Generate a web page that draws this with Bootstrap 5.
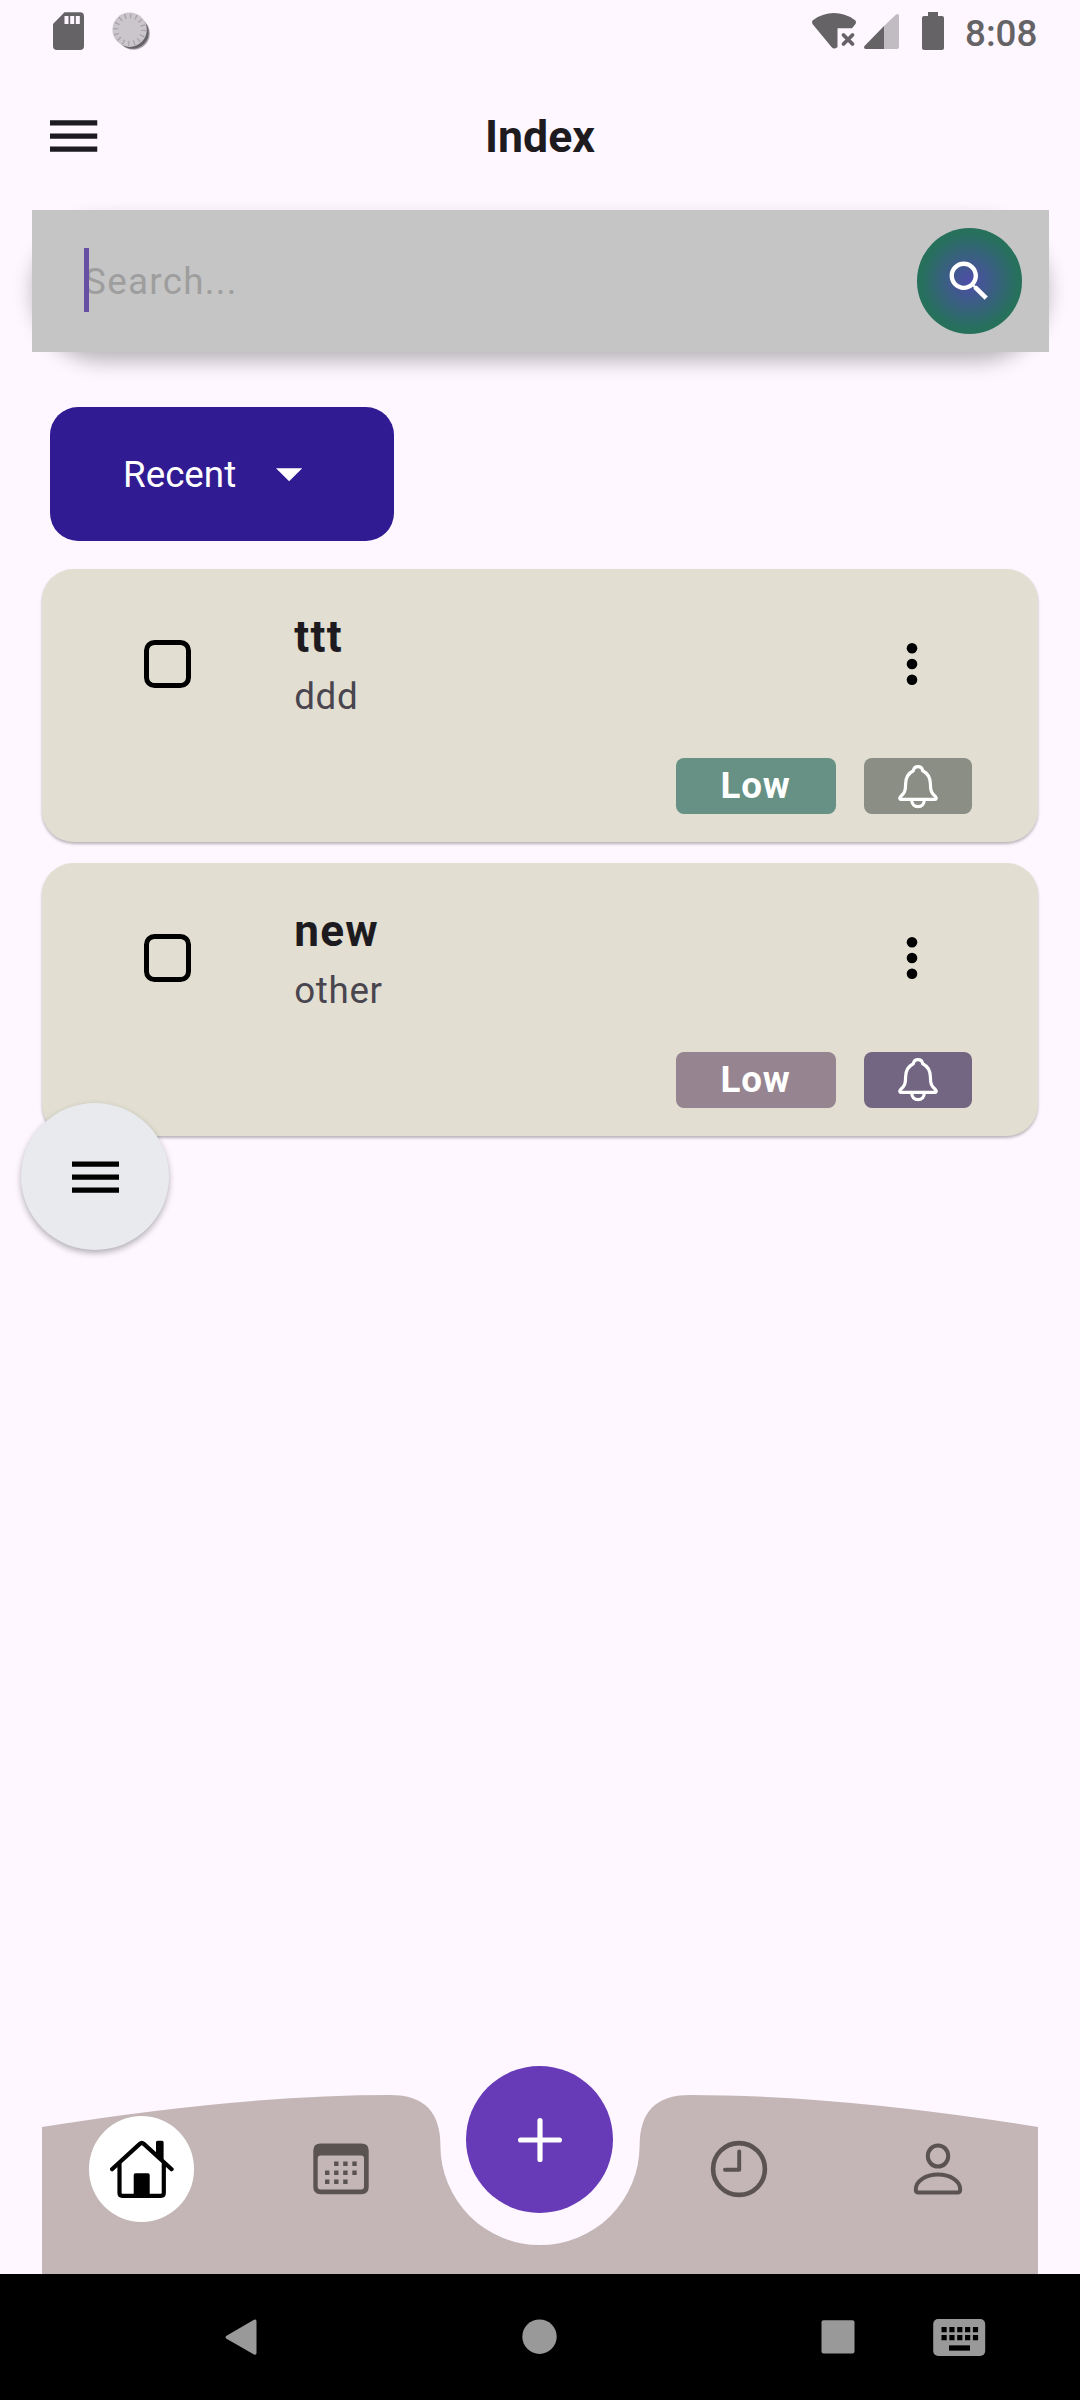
<!DOCTYPE html>
<html lang="en">
<head>
<meta charset="utf-8">
<meta name="viewport" content="width=device-width, initial-scale=1">
<title>Index</title>
<link href="https://cdn.jsdelivr.net/npm/bootstrap@5.3.0/dist/css/bootstrap.min.css" rel="stylesheet">
<style>
body{margin:0;background:#fef7ff;font-family:Roboto,"Liberation Sans",sans-serif;color:#1d1b20}
.screen{width:1080px;height:2400px;overflow:hidden}
svg{display:block;flex:none}
.status{height:63px}
.clock-text{font-size:36.75px;font-weight:500;line-height:67px;color:#656366;width:115px}
.appbar{height:147px;padding:0 50px}
.appbar h1{font-size:44.6px;font-weight:700;line-height:60px}
.appbar svg{margin-bottom:1px}
.side{width:48px}
.search-pill{margin:0 31.5px;height:142px;border-radius:71px;background:#999;box-shadow:0 10px 20px -1px rgba(0,0,0,.28)}
.search-box{height:141.5px;background:#c5c5c5;padding-left:52.5px;padding-right:26.5px}
.caret{width:5.25px;height:64px;background:#6750a4;top:38px;left:52.5px}
.search-hint{font-size:36.75px;letter-spacing:1.31px;color:#9e9e9e;padding-top:2px}
.search-btn{width:105.5px;height:105.5px;background:radial-gradient(circle closest-side at 50% 50%,#4f4da9 0%,#26705c 92%)}
.sort-btn,.sort-btn:hover{width:343.5px;height:133.7px;margin:55px 0 0 50px;border-radius:28px;background:#311b92;color:#fff;font-size:36.75px;padding:2px 0 0 73px;border:0}
.sort-btn svg{margin-right:91.5px}
.tasks{margin:28.3px 42px 0;gap:20.5px}
.task{height:273.4px;border:0;border-radius:31.5px;background:#e2dfd2;box-shadow:0 2px 3px rgba(0,0,0,.28);padding:37px 66px 0 101.5px}
.task-top{height:120px}
.tick{width:47.6px;height:47.6px;border:5.25px solid #000;border-radius:10.5px;margin-bottom:4px}
.task-text{margin-left:103.1px;padding-top:2px}
.task-title{font-size:44.1px;font-weight:700;line-height:60px;letter-spacing:1.31px}
.task-sub{font-size:36.75px;line-height:60px;color:#49454f;letter-spacing:.66px}
.dots{margin-right:54px;margin-bottom:4px}
.chips{margin-top:32.4px;gap:28.5px}
.chip{height:55.3px;border-radius:8px;color:#fff;font-weight:700;font-size:36.75px;letter-spacing:.8px}
.chip-level{width:160.2px}
.chip-bell{width:107.8px}
.chip-bell svg{margin-top:1px}
.c-teal{background:#679184}.c-olive{background:#8b8e84}.c-mauve{background:#968490}.c-violet{background:#736682}
.fab{left:21px;top:1103px;width:148px;height:147px;background:#e8eaed;box-shadow:0 3px 6px rgba(0,0,0,.3)}
.fab svg{margin:1px 0 0 1px}
.tabs{margin:auto 42px 0;height:180px}
.tabs-bg{left:0;top:0}
.tab-cell{width:20%;height:150px}
.home-disc{width:105.5px;height:105.5px;background:#fff}
.add-disc{width:147px;height:147px;background:#673ab7;margin-top:-59px}
.sysnav{height:126px;background:#000}
</style>
</head>
<body>
<div class="screen position-relative d-flex flex-column">
  <div class="status d-flex justify-content-between">
    <svg width="200" height="63" viewBox="0 0 200 63">
      <path fill="#656366" d="M64.500 12.300H80Q84 12.300 84 16.300V46Q84 50 80 50H57Q53 50 53 46V24Z"/>
      <path fill="#fef7ff" d="M64.500 16h4v8h-4zM70.200 16h4v8h-4zM75.800 16h4v8h-4z"/>
      <circle cx="133.500" cy="33.500" r="16.300" fill="#aaa6ab"/><circle cx="132.500" cy="32.500" r="16.200" fill="#656366"/>
      <circle cx="129.600" cy="29.700" r="17.200" fill="#cbc5cc"/>
      <circle cx="129.600" cy="29.700" r="13.700" fill="none" stroke="#aaa5ab" stroke-width="5" stroke-dasharray="1.400 3.980"/>
    </svg>
    <div class="d-flex">
      <svg width="154" height="63" viewBox="812 0 154 63" fill="#656366">
        <path d="M813.500 24Q812 21 815 19.500Q824 13 835 13Q846 13 855 19.500Q858 21 856.500 24L853 28.300H838.500V47Q835 50 832.500 47Z"/>
        <path d="M844.500 35l9 9m0-9l-9 9" stroke="#656366" stroke-width="3.800" stroke-linecap="round"/>
        <path fill="#c1bcc2" d="M885 26L897 14.500Q900 13 900 16V47Q900 49 898 49H885Z"/>
        <path d="M885 26V49H867Q864 48.500 865.500 46Z"/>
        <path d="M929 12h10v4h4q2 0 2 2v30q0 2-2 2h-18q-2 0-2-2v-30q0-2 2-2h4z"/>
      </svg>
      <span class="clock-text">8:08</span>
    </div>
  </div>

  <header class="appbar d-flex align-items-center justify-content-between">
    <svg width="48" height="34" viewBox="0 0 48 34"><path d="M0 3.900h47.250M0 17h47.250M0 30.100h47.250" stroke="#1d1b20" stroke-width="5.250"/></svg>
    <h1 class="m-0">Index</h1>
    <div class="side"></div>
  </header>

  <div class="search-pill">
    <div class="search-box position-relative d-flex align-items-center justify-content-between">
      <span class="caret position-absolute"></span>
      <span class="search-hint">Search...</span>
      <div class="search-btn rounded-circle d-flex align-items-center justify-content-center">
        <svg width="52.500" height="52.500" viewBox="0 0 24 24" fill="#fff"><path d="M15.500 14h-.79l-.28-.27C15.410 12.590 16 11.110 16 9.500 16 5.910 13.090 3 9.500 3S3 5.910 3 9.500 5.910 16 9.500 16c1.610 0 3.090-.59 4.230-1.570l.27.28v.79l5 4.990L20.490 19l-4.990-5zm-6 0C7.010 14 5 11.990 5 9.500S7.010 5 9.500 5 14 7.010 14 9.500 11.990 14 9.500 14z"/></svg>
      </div>
    </div>
  </div>

  <button class="btn sort-btn d-flex align-items-center flex-shrink-0" type="button">Recent
    <svg class="ms-auto" width="26.300" height="13.500" viewBox="0 0 10 5"><path d="M0 0h10L5 5z" fill="#fff"/></svg>
  </button>

  <div class="tasks d-flex flex-column">
    <div class="card task">
      <div class="task-top d-flex align-items-center">
        <span class="tick"></span>
        <div class="task-text flex-grow-1"><div class="task-title">ttt</div><div class="task-sub">ddd</div></div>
        <svg class="dots" width="12" height="44" viewBox="-6 -22 12 44"><circle r="5.300" cy="-15.800"/><circle r="5.300"/><circle r="5.300" cy="15.800"/></svg>
      </div>
      <div class="chips d-flex justify-content-end">
        <span class="chip chip-level c-teal d-flex align-items-center justify-content-center">Low</span>
        <span class="chip chip-bell c-olive d-flex align-items-center justify-content-center">
          <svg width="40" height="44" viewBox="0 0 40 44" fill="none" stroke="#fff" stroke-width="3.200" stroke-linejoin="round"><path id="bell" d="M20 1.700C17.500 1.700 15.800 3.200 15.300 5.800C10 8.500 7.600 13 7.600 19C7.600 26 6.500 28 2.600 31.500C1.200 33 1.600 34.400 3 34.400H37C38.400 34.400 38.800 33 37.400 31.500C33.500 28 32.400 26 32.400 19C32.400 13 30 8.500 24.700 5.800C24.200 3.200 22.500 1.700 20 1.700ZM13.700 34.800C13.700 39 16.300 41.700 20 41.700S26.300 39 26.300 34.800"/></svg>
        </span>
      </div>
    </div>
    <div class="card task">
      <div class="task-top d-flex align-items-center">
        <span class="tick"></span>
        <div class="task-text flex-grow-1"><div class="task-title">new</div><div class="task-sub">other</div></div>
        <svg class="dots" width="12" height="44" viewBox="-6 -22 12 44"><circle r="5.300" cy="-15.800"/><circle r="5.300"/><circle r="5.300" cy="15.800"/></svg>
      </div>
      <div class="chips d-flex justify-content-end">
        <span class="chip chip-level c-mauve d-flex align-items-center justify-content-center">Low</span>
        <span class="chip chip-bell c-violet d-flex align-items-center justify-content-center">
          <svg width="40" height="44" viewBox="0 0 40 44" fill="none" stroke="#fff" stroke-width="3.200" stroke-linejoin="round"><use href="#bell"/></svg>
        </span>
      </div>
    </div>
  </div>

  <div class="fab position-absolute rounded-circle d-flex align-items-center justify-content-center">
    <svg width="47.250" height="32" viewBox="0 0 47.250 32"><path d="M0 3h47.250M0 16.100h47.250M0 29.200h47.250" stroke="#000" stroke-width="5.250"/></svg>
  </div>

  <nav class="tabs position-relative d-flex flex-shrink-0">
    <svg class="tabs-bg position-absolute" width="996" height="180" viewBox="0 0 996 180"><path fill="#c4b6b6" d="M0 33Q199.200 1 348.600 1Q398.400 1 398.400 51.500A99.600 99.600 0 0 0 597.600 51.500Q597.600 1 647.400 1Q796.800 1 996 33V180H0Z"/></svg>
    <div class="tab-cell position-relative d-flex align-items-center justify-content-center">
      <div class="home-disc rounded-circle d-flex align-items-center justify-content-center">
        <svg width="64" height="60" viewBox="110 2139 64 60" fill="none" stroke="#000" stroke-width="4.200" stroke-linecap="round" stroke-linejoin="round"><path d="M112 2169.200L139.800 2143.900Q141.800 2142.100 143.800 2143.900L171.600 2169.200M119.500 2163V2193Q119.500 2195.800 122.300 2195.800H161Q163.800 2195.800 163.800 2193V2163"/><path fill="#000" stroke="none" d="M156 2154V2142.200Q156 2140.700 157.500 2140.700H162Q163.600 2140.700 163.600 2142.200V2161ZM133.700 2197V2175Q133.700 2173.300 135.400 2173.300H148Q149.700 2173.300 149.700 2175V2197Z"/></svg>
      </div>
    </div>
    <div class="tab-cell position-relative d-flex align-items-center justify-content-center">
      <svg width="56" height="52" viewBox="313 2143.500 56 52" fill="#5a5352"><path fill-rule="evenodd" d="M320.500 2144H361.500Q368.700 2144 368.700 2151V2187.500Q368.700 2194.700 361.500 2194.700H320.500Q313.300 2194.700 313.300 2187.500V2151Q313.300 2144 320.500 2144ZM320.700 2156Q317.700 2156 317.700 2159V2187Q317.700 2190 320.700 2190H361Q364 2190 364 2187V2159Q364 2156 361 2156Z"/><path d="M336.300 2162v4.500M345.400 2162v4.500M354.500 2162v4.500M327.200 2171v4.500M336.300 2171v4.500M345.400 2171v4.500M354.500 2171v4.500M327.200 2180v4.500M336.300 2180v4.500M345.400 2180v4.500" stroke="#5a5352" stroke-width="4.400"/></svg>
    </div>
    <div class="tab-cell position-relative d-flex align-items-center justify-content-center">
      <div class="add-disc rounded-circle d-flex align-items-center justify-content-center flex-shrink-0">
        <svg width="46" height="46" viewBox="-23 -23 46 46"><path d="M-19.400 0H19.400M0-19.400V19.400" stroke="#fff" stroke-width="5.200" stroke-linecap="round"/></svg>
      </div>
    </div>
    <div class="tab-cell position-relative d-flex align-items-center justify-content-center">
      <svg width="58" height="58" viewBox="-29 -29 58 58" fill="none" stroke="#5a5352" stroke-width="4.600"><circle r="25.900"/><path d="M.2-17.500V.8H-14" stroke-width="3.900" stroke-linecap="round" stroke-linejoin="round"/></svg>
    </div>
    <div class="tab-cell position-relative d-flex align-items-center justify-content-center">
      <svg width="50" height="52" viewBox="913.500 2143.500 50 52" fill="none" stroke="#5a5352" stroke-width="4"><ellipse cx="938.500" cy="2156.500" rx="10.200" ry="10.600"/><path d="M916.300 2190C916.300 2181.500 926 2175 938.500 2175S960.700 2181.500 960.700 2190Q960.700 2193 958 2193H919Q916.300 2193 916.300 2190Z"/></svg>
    </div>
  </nav>

  <div class="sysnav flex-shrink-0">
    <svg width="1080" height="126" viewBox="0 2274 1080 126" fill="#999">
      <path d="M254 2319.800Q256.500 2318.500 256.500 2321.500V2353Q256.500 2355.500 254 2354.500L226.500 2338.700Q224.500 2337.200 226.500 2335.700Z"/>
      <circle cx="539.500" cy="2336.700" r="17.200"/>
      <rect x="821.500" y="2320.200" width="33" height="33.400" rx="2"/>
      <rect x="933.200" y="2319" width="52" height="37" rx="5"/>
      <g stroke="#000" stroke-width="5.300" fill="none"><path d="M941.500 2329.700h36.600M941.500 2337.700h36.600" stroke-dasharray="5.200 2.650"/><path d="M949 2348h21"/></g>
    </svg>
  </div>
</div>
<script src="https://cdn.jsdelivr.net/npm/bootstrap@5.3.0/dist/js/bootstrap.bundle.min.js"></script>
</body>
</html>
